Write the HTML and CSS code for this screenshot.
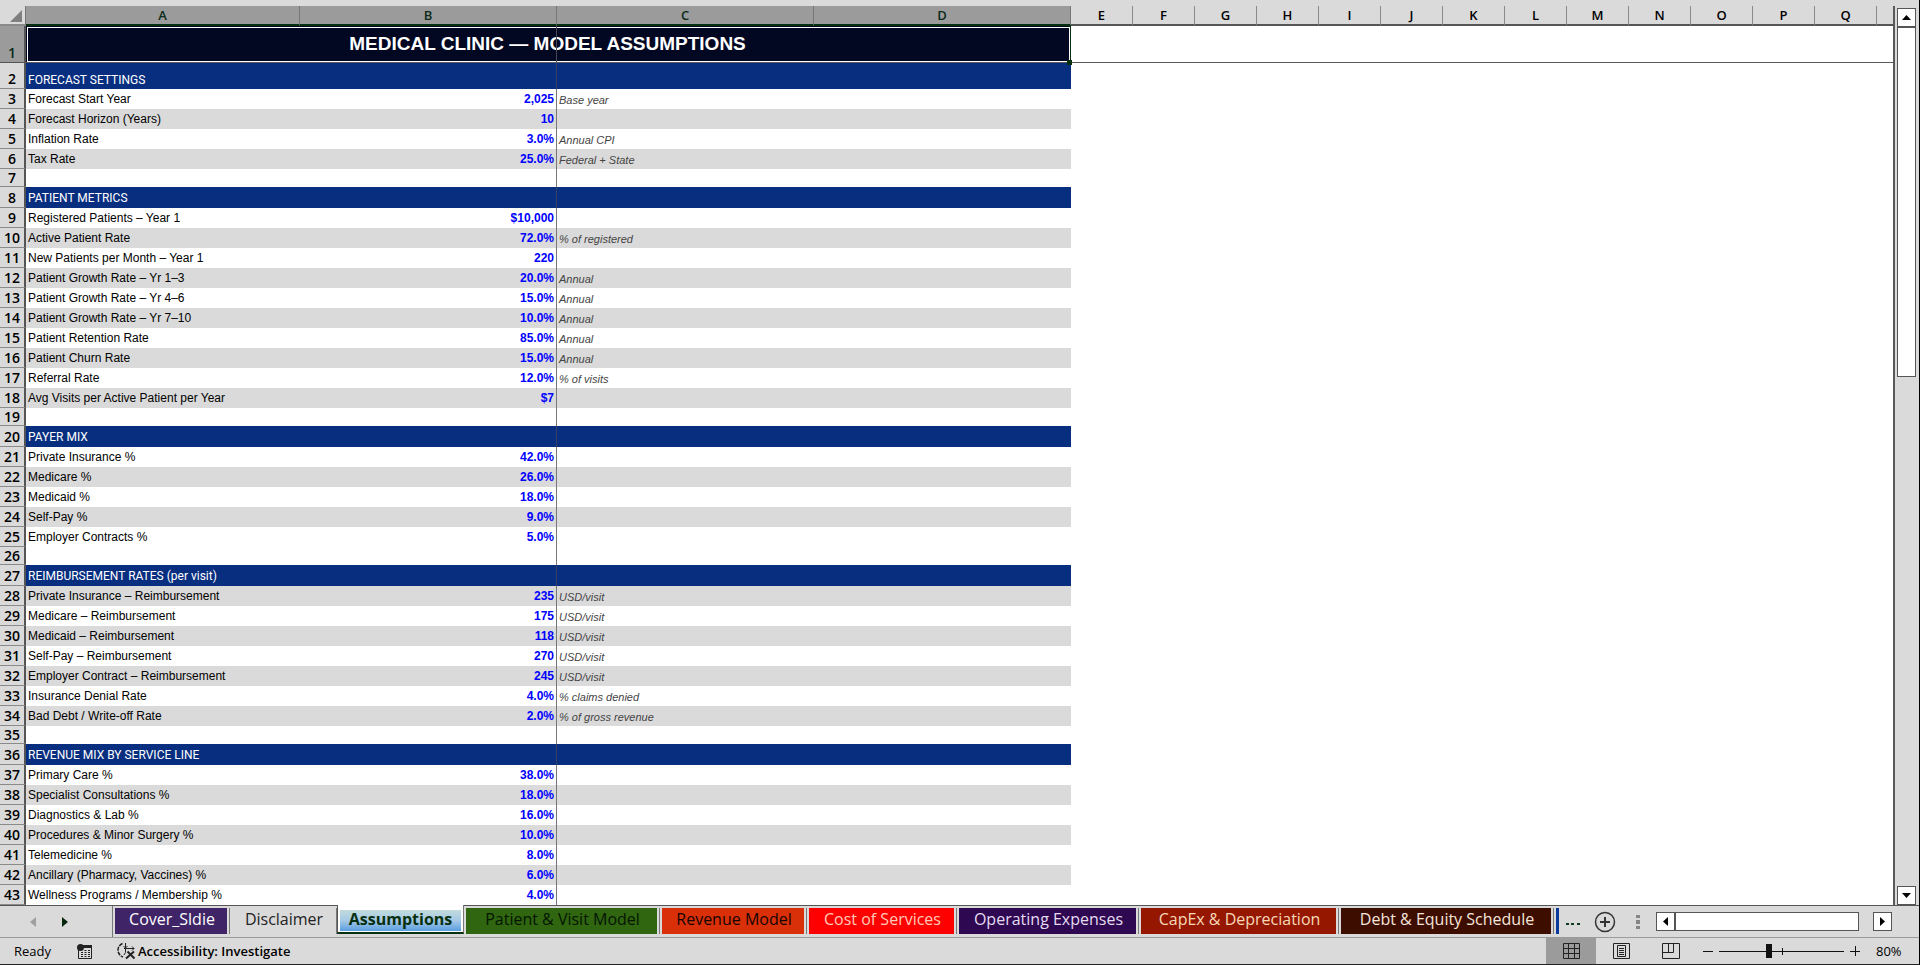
FILE: index.html
```html
<!DOCTYPE html>
<html lang="en">
<head>
    <meta charset="UTF-8">
    <meta name="viewport" content="width=device-width, initial-scale=1.0">
    <title>Medical Clinic - Assumptions</title>
    <link rel="stylesheet" href="styles.css">
</head>
<body>
    <main class="workbook">
        <div class="sheet-area">
            <div class="grid">
                <table class="sheet">
                    <colgroup>
                        <col class="col-head">
                        <col class="col-a">
                        <col class="col-b">
                        <col class="col-c">
                        <col class="col-d">
                        <col class="col-std" span="13">
                        <col>
                    </colgroup>
                    <thead>
                        <tr>
                            <th class="corner"><svg width="12" height="12" viewBox="0 0 12 12"><path d="M12 0v12H0z" fill="#7f7f7f"/></svg></th>
                            <th class="selected">A</th>
                            <th class="selected frozen">B</th>
                            <th class="selected">C</th>
                            <th class="selected">D</th>
                            <th>E</th><th>F</th><th>G</th><th>H</th><th>I</th><th>J</th><th>K</th>
                            <th>L</th><th>M</th><th>N</th><th>O</th><th>P</th><th>Q</th><th class="last"></th>
                        </tr>
                    </thead>
                    <tbody id="sheet-body">
                        <!-- Rows are filled by script.js -->
                    </tbody>
                </table>
            </div>
            <div class="vscroll">
                <button type="button" aria-label="Scroll up"><svg width="9" height="5" viewBox="0 0 9 5"><path d="M4.500 0L9 5H0z"/></svg></button>
                <div class="vthumb"></div>
                <button type="button" class="down" aria-label="Scroll down"><svg width="9" height="5" viewBox="0 0 9 5"><path d="M0 0h9L4.500 5z"/></svg></button>
            </div>
        </div>

        <nav class="tab-bar">
            <div class="tab-nav">
                <button type="button" aria-label="Previous sheet"><svg width="6" height="10" viewBox="0 0 6 10"><path d="M6 0v10L0 5z" fill="#a0a0a0"/></svg></button>
                <button type="button" aria-label="Next sheet"><svg width="6" height="10" viewBox="0 0 6 10"><path d="M0 0v10l6-5z" fill="#06280f"/></svg></button>
            </div>
            <div class="tabs">
                <a href="#" class="tab cover">Cover_Sldie</a>
                <a href="#" class="tab disclaimer">Disclaimer</a>
                <a href="#" class="tab active"><span>Assumptions</span></a>
                <a href="#" class="tab patient">Patient &amp; Visit Model</a>
                <a href="#" class="tab revenue">Revenue Model</a>
                <a href="#" class="tab cost">Cost of Services</a>
                <a href="#" class="tab operating">Operating Expenses</a>
                <a href="#" class="tab capex">CapEx &amp; Depreciation</a>
                <a href="#" class="tab debt">Debt &amp; Equity Schedule</a>
                <span class="tab-more"></span>
            </div>
            <div class="tab-tools">
                <button type="button" class="more" aria-label="More sheets"><svg width="14" height="2" viewBox="0 0 14 2"><path d="M0 0h3v2H0zM5 0h3v2H5zM11 0h3v2h-3z" fill="#0b3a20"/></svg></button>
                <button type="button" aria-label="New sheet"><svg width="22" height="22" viewBox="0 0 22 22" fill="none" stroke="#333"><circle cx="11" cy="11" r="9.500" stroke-width="1.500"/><path d="M11 6v10M6 11h10" stroke-width="2"/></svg></button>
                <svg class="grip" width="4" height="14" viewBox="0 0 4 14"><path d="M0 0h4v3H0zM0 5h4v4H0zM0 11h4v3H0z" fill="#858585"/></svg>
            </div>
            <div class="hscroll">
                <button type="button" aria-label="Scroll left"><svg width="5" height="9" viewBox="0 0 5 9"><path d="M5 0v9L0 4.500z"/></svg></button>
                <div class="hthumb"></div>
                <button type="button" class="right" aria-label="Scroll right"><svg width="5" height="9" viewBox="0 0 5 9"><path d="M0 0v9l5-4.500z"/></svg></button>
            </div>
        </nav>

        <footer class="status-bar">
            <span class="ready">Ready</span>
            <button type="button" class="macro" aria-label="Record macro">
                <svg width="16" height="15" viewBox="0 0 16 15"><path d="M1.500 6v8.500h13V2.500H6" fill="none" stroke="#222"/><path d="M6 1h9v3H6z" fill="#222"/><circle cx="3.500" cy="3.500" r="3.500" fill="#222"/><path d="M4 8.500h2M7.500 8.500h2M11 8.500h2M4 10.500h2M7.500 10.500h2M11 10.500h2M4 12.500h2M7.500 12.500h2M11 12.500h2M7.500 6.500h2M11 6.500h2" stroke="#222"/></svg>
            </button>
            <button type="button" class="accessibility">
                <svg width="19" height="18" viewBox="0 0 19 18" fill="none" stroke="#222"><path d="M5.500 1.500C2.500 3 1 5 1 8s1.500 5.500 5 7" stroke-width="1.500" stroke-dasharray="4 1"/><path d="M8.500 1v5M6.500 4l2 2 2-2M7 6.500h10M15 4.500l2 2-2 2M8.500 6.500v4L7 13"/><path d="M10.500 9.500l7 7M17 9.500l-8 7" stroke-width="2"/></svg>
                Accessibility: Investigate
            </button>
            <div class="views">
                <button type="button" class="view current" aria-label="Normal"><svg width="17" height="16" viewBox="0 0 17 16"><path d="M.5.5h16v15H.5zM.5 5.500h16M.5 10.500h16M5.500.5v15M11.500.5v15" fill="none" stroke="#222"/></svg></button>
                <button type="button" class="view" aria-label="Page layout"><svg width="17" height="16" viewBox="0 0 17 16"><path d="M.5.5h16v15H.5zM4.500 2.500h8v11h-8zM6 5.500h5M6 7.500h5M6 9.500h5M6 11.500h5" fill="none" stroke="#222"/></svg></button>
                <button type="button" class="view" aria-label="Page break preview"><svg width="18" height="16" viewBox="0 0 18 16"><path d="M.5.5h17v15H.5zM.5 9.500h11V.5M6.500.5v9" fill="none" stroke="#222"/></svg></button>
            </div>
            <div class="zoom">
                <button type="button" aria-label="Zoom out"><svg width="10" height="10" viewBox="0 0 10 10"><path d="M0 5.500h10" stroke="#111"/></svg></button>
                <input type="range" class="zoom-range" min="10" max="190" value="81" aria-label="Zoom">
                <button type="button" aria-label="Zoom in"><svg width="10" height="10" viewBox="0 0 10 10"><path d="M0 5.500h10M5.500 0v10" stroke="#111"/></svg></button>
                <span class="zoom-value">80%</span>
            </div>
        </footer>
    </main>

    <script src="script.js"></script>
</body>
</html>
```
FILE: styles.css
```css
* {
    box-sizing: border-box;
}
body {
    margin: 0;
    font-family: "Open Sans", "Noto Sans", sans-serif;
    background-color: #dadada;
    color: #000000;
}
button {
    display: flex;
    align-items: center;
    justify-content: center;
    padding: 0;
    border: none;
    background: none;
    font-family: inherit;
    color: inherit;
}
svg {
    display: block;
}
.workbook {
    display: flex;
    flex-direction: column;
    height: 100vh;
    border-right: 1px solid #000000;
    border-bottom: 1px solid #222222;
}

/* Grid */
.sheet-area {
    display: flex;
    flex: 1;
    min-height: 0;
}
.grid {
    flex: 1;
    min-width: 0;
    padding-top: 6px;
    overflow: hidden;
}
.sheet {
    width: 100%;
    table-layout: fixed;
    border-collapse: separate;
    border-spacing: 0;
    background-color: #ffffff;
    border-right: 2px solid #5a5a5a;
    font-family: "Liberation Sans", Arial, sans-serif;
    font-size: 12px;
}
.col-head { width: 26px; }
.col-a { width: 274px; }
.col-b { width: 257px; }
.col-c { width: 257px; }
.col-d { width: 257px; }
.col-std { width: 62px; }
.sheet th,
.sheet td {
    padding: 0;
    height: 20px;
    line-height: 18px;
    white-space: nowrap;
    overflow: hidden;
}
.sheet th {
    font-family: "Open Sans", sans-serif;
    font-weight: 600;
    background-color: #dadada;
}
.sheet thead th {
    height: 20px;
    padding-top: 1px;
    line-height: 17px;
    font-size: 13px;
    border-right: 1px solid #8a8a8a;
    border-bottom: 2px solid #555555;
}
.sheet thead th.selected {
    background-color: #9b9b9b;
    color: #0a2a1a;
    border-right-color: #777777;
    border-bottom-color: #06300f;
}
.sheet thead th.corner {
    border-right: 1px solid #777777;
    border-bottom-color: #8a8a8a;
}
.corner svg {
    margin-left: 10px;
}
.sheet thead th.last {
    border-right: none;
}
.sheet tbody th {
    font-size: 14px;
    text-align: center;
    vertical-align: bottom;
    border-right: 2px solid #555555;
    border-bottom: 1px solid #8a8a8a;
}
.sheet td {
    vertical-align: middle;
}
.sheet .title-row th {
    height: 37px;
    background-color: #9b9b9b;
    color: #0a2a1a;
    border-bottom-color: #555555;
}
.sheet .title-row td {
    border-bottom: 1px solid #5a5a5a;
}
.sheet .title-row .title {
    position: relative;
    overflow: visible;
    background-color: #020722;
    color: #ffffff;
    font-size: 19px;
    font-weight: bold;
    text-align: center;
    line-height: 24px;
    outline: 1px solid #ffffff;
    outline-offset: -2px;
    border-right: 2px solid #06300f;
}
/* fill handle of the selected cell */
.title::before {
    content: "";
    position: absolute;
    right: -3px;
    bottom: -3px;
    width: 5px;
    height: 5px;
    background-color: #06300f;
}
/* freeze pane line runs over the merged cell */
.title::after {
    content: "";
    position: absolute;
    top: 0;
    bottom: 0;
    left: 530px;
    width: 1px;
    background-color: #4a4a55;
}
.sheet .section-row td,
.sheet .section-row th {
    height: 21px;
}
.sheet .section-row.tall td,
.sheet .section-row.tall th {
    height: 26px;
    vertical-align: bottom;
}
.sheet .blank-row td,
.sheet .blank-row th {
    height: 18px;
    line-height: 16px;
}
.sheet .frozen {
    border-right: 1px solid #777777;
}
.section-row .fill {
    background-color: #082e7f;
    color: #ffffff;
    font-family: Roboto, sans-serif;
}
.sheet .section-row .frozen {
    border-right-color: #38406a;
}
.band .fill {
    background-color: #dadada;
}
.sheet .label {
    padding-left: 2px;
}
.sheet .value {
    padding-right: 2px;
    text-align: right;
    font-weight: bold;
    color: #0000ff;
}
.sheet .note {
    padding: 2px 0 0 2px;
    font-size: 11px;
    line-height: 16px;
    font-style: italic;
    color: #444444;
}

/* Vertical scroll bar */
.vscroll {
    display: flex;
    flex-direction: column;
    width: 24px;
    padding: 8px 3px 0 2px;
}
.vscroll button,
.hscroll button {
    flex: none;
    width: 19px;
    height: 19px;
    background-color: #ffffff;
    border: 1px solid #555555;
}
.vthumb {
    height: 350px;
    background-color: #ffffff;
    border: 1px solid #555555;
}
.vscroll .down {
    margin-top: auto;
}

/* Sheet tabs */
.tab-bar {
    display: flex;
    align-items: center;
    height: 33px;
    border-top: 1px solid #555555;
    border-bottom: 1px solid #9b9b9b;
}
.tab-nav {
    display: flex;
    gap: 26px;
    width: 112px;
    padding-left: 30px;
}
.tabs {
    display: flex;
    height: 31px;
    padding-bottom: 3px;
    border-left: 1px solid #777777;
}
.tab {
    flex: none;
    margin-top: 2px;
    border-right: 1px solid #777777;
    border-left: 2px solid #dadada;
    box-shadow: inset -2px 0 #dadada;
    font-size: 16px;
    line-height: 23px;
    text-align: center;
    text-decoration: none;
    color: #ffffff;
}
.cover { width: 117px; background-color: #402468; }
.disclaimer { width: 107px; color: #222222; }
.patient { width: 196px; background-color: #2f660f; color: #061503; }
.revenue { width: 147px; background-color: #da3009; color: #140500; }
.cost { width: 150px; background-color: #ff0000; color: #ffc9b8; }
.operating { width: 182px; background-color: #2e0850; color: #e5dcf2; }
.capex { width: 200px; background-color: #961700; color: #f7d9b8; }
.debt { width: 215px; background-color: #3d0d00; color: #f5e6dc; }
.active {
    width: 127px;
    margin-top: -1px;
    padding: 5px 2px 0;
    border-left: 1px solid #555555;
    border-bottom: 2px solid #06300f;
    background-color: #ffffff;
    box-shadow: none;
    color: #06300f;
    font-weight: bold;
}
.active span {
    display: block;
    height: 21px;
    line-height: 19px;
    background: linear-gradient(#c3dcdc, #a5c8e6 50%, #5a9ee0);
}
.tab-more {
    width: 5px;
    margin-top: 2px;
    border-right: 3px solid #0b3a9b;
}
.tab-tools {
    display: flex;
    align-items: center;
    gap: 14px;
    margin-left: auto;
}
.more {
    padding-top: 4px;
}
.grip {
    margin-left: 6px;
}
.hscroll {
    display: flex;
    width: 236px;
    margin: 0 27px 0 16px;
}
.hthumb {
    flex: 1;
    border: 1px solid #555555;
    background-color: #ffffff;
}
.hscroll .right {
    margin-left: 14px;
}

/* Status bar */
.status-bar {
    display: flex;
    align-items: center;
    height: 26px;
    font-size: 13px;
}
.ready {
    width: 63px;
    padding-left: 14px;
}
.macro {
    margin-left: 14px;
}
.accessibility {
    gap: 2px;
    margin-left: 24px;
    font-size: 13px;
    font-weight: 600;
}
.views {
    display: flex;
    height: 100%;
    margin-left: auto;
}
.view {
    width: 50px;
}
.view.current {
    background-color: #9b9b9b;
}
.zoom {
    display: flex;
    align-items: center;
    margin-left: 7px;
}
.zoom-range {
    appearance: none;
    width: 125px;
    height: 16px;
    margin: 0 6px;
    background: linear-gradient(#111111, #111111) 63px 5px / 1px 7px no-repeat,
                linear-gradient(#111111, #111111) 0 8px / 100% 1px no-repeat;
}
.zoom-range::-webkit-slider-thumb {
    appearance: none;
    width: 6px;
    height: 14px;
    background-color: #111111;
}
.zoom-value {
    width: 59px;
    padding-left: 16px;
}
```
FILE: script.js
```js
// [label, value, note], a plain string is a section heading, null is an empty row
const rows = [
    'FORECAST SETTINGS',
    ['Forecast Start Year', '2,025', 'Base year'],
    ['Forecast Horizon (Years)', '10', ''],
    ['Inflation Rate', '3.0%', 'Annual CPI'],
    ['Tax Rate', '25.0%', 'Federal + State'],
    null,
    'PATIENT METRICS',
    ['Registered Patients – Year 1', '$10,000', ''],
    ['Active Patient Rate', '72.0%', '% of registered'],
    ['New Patients per Month – Year 1', '220', ''],
    ['Patient Growth Rate – Yr 1–3', '20.0%', 'Annual'],
    ['Patient Growth Rate – Yr 4–6', '15.0%', 'Annual'],
    ['Patient Growth Rate – Yr 7–10', '10.0%', 'Annual'],
    ['Patient Retention Rate', '85.0%', 'Annual'],
    ['Patient Churn Rate', '15.0%', 'Annual'],
    ['Referral Rate', '12.0%', '% of visits'],
    ['Avg Visits per Active Patient per Year', '$7', ''],
    null,
    'PAYER MIX',
    ['Private Insurance %', '42.0%', ''],
    ['Medicare %', '26.0%', ''],
    ['Medicaid %', '18.0%', ''],
    ['Self-Pay %', '9.0%', ''],
    ['Employer Contracts %', '5.0%', ''],
    null,
    'REIMBURSEMENT RATES (per visit)',
    ['Private Insurance – Reimbursement', '235', 'USD/visit'],
    ['Medicare – Reimbursement', '175', 'USD/visit'],
    ['Medicaid – Reimbursement', '118', 'USD/visit'],
    ['Self-Pay – Reimbursement', '270', 'USD/visit'],
    ['Employer Contract – Reimbursement', '245', 'USD/visit'],
    ['Insurance Denial Rate', '4.0%', '% claims denied'],
    ['Bad Debt / Write-off Rate', '2.0%', '% of gross revenue'],
    null,
    'REVENUE MIX BY SERVICE LINE',
    ['Primary Care %', '38.0%', ''],
    ['Specialist Consultations %', '18.0%', ''],
    ['Diagnostics & Lab %', '16.0%', ''],
    ['Procedures & Minor Surgery %', '10.0%', ''],
    ['Telemedicine %', '8.0%', ''],
    ['Ancillary (Pharmacy, Vaccines) %', '6.0%', ''],
    ['Wellness Programs / Membership %', '4.0%', '']
];

const body = document.getElementById('sheet-body');
let html = `<tr class="title-row"><th>1</th><td class="title" colspan="4">MEDICAL CLINIC — MODEL ASSUMPTIONS</td><td colspan="14"></td></tr>`;

rows.forEach((row, i) => {
    const number = i + 2;
    let rowClass = number % 2 === 0 ? 'band' : '';
    let cells = ['', '', ''];
    if (row === null) {
        rowClass = 'blank-row';
    } else if (typeof row === 'string') {
        rowClass = number === 2 ? 'section-row tall' : 'section-row';
        cells[0] = row;
    } else {
        cells = row;
    }
    html += `
        <tr class="${rowClass}">
            <th>${number}</th>
            <td class="fill label">${cells[0].replace('&', '&amp;')}</td>
            <td class="fill value frozen">${cells[1]}</td>
            <td class="fill note">${cells[2]}</td>
            <td class="fill"></td>
            <td colspan="14"></td>
        </tr>`;
});
body.innerHTML = html;
```
